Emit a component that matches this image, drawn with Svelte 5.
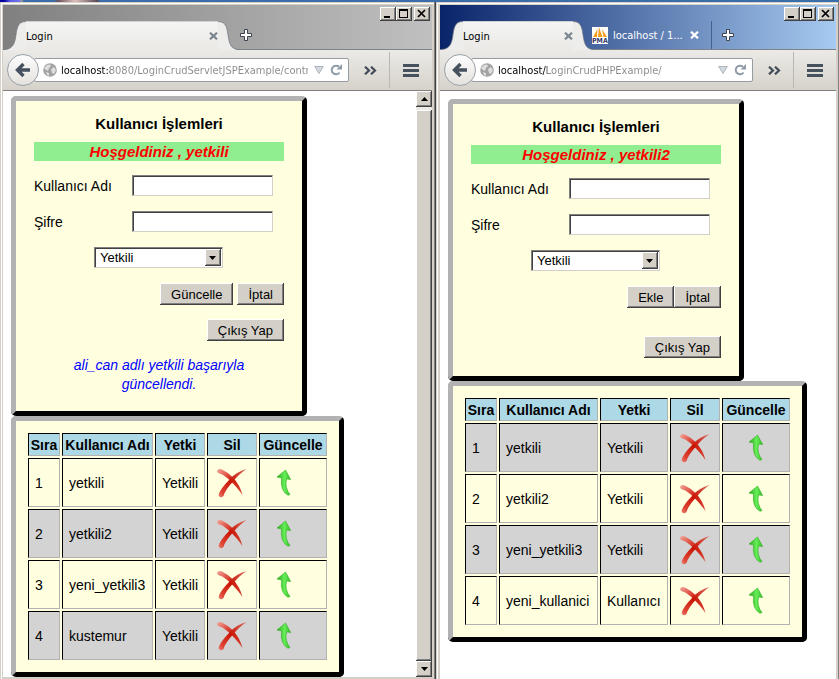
<script>
  const windows = [
    {
      id: 'jsp',
      active: false,
      host: 'localhost',
      path: ':8080/LoginCrudServletJSPExample/controller',
      extraTab: null,
      greeting: 'Hoşgeldiniz , yetkili',
      submit: 'Güncelle',
      message: 'ali_can adlı yetkili başarıyla güncellendi.',
      scroll: true,
      widths: [32, 91, 50, 50, 68],
      rows: [
        ['1', 'yetkili', 'Yetkili'],
        ['2', 'yetkili2', 'Yetkili'],
        ['3', 'yeni_yetkili3', 'Yetkili'],
        ['4', 'kustemur', 'Yetkili']
      ]
    },
    {
      id: 'php',
      active: true,
      host: 'localhost',
      path: '/LoginCrudPHPExample/',
      extraTab: 'localhost / 1...',
      greeting: 'Hoşgeldiniz , yetkili2',
      submit: 'Ekle',
      message: '',
      scroll: false,
      widths: [32, 99, 68, 50, 68],
      rows: [
        ['1', 'yetkili', 'Yetkili'],
        ['2', 'yetkili2', 'Yetkili'],
        ['3', 'yeni_yetkili3', 'Yetkili'],
        ['4', 'yeni_kullanici', 'Kullanıcı']
      ]
    }
  ];
  const headers = ['Sıra', 'Kullanıcı Adı', 'Yetki', 'Sil', 'Güncelle'];
</script>

{#snippet plus()}
  <button class="bare plus" aria-label="Yeni sekme">
    <svg width="12" height="12" viewBox="0 0 12 12"><path d="M4.5.5h3v4h4v3h-4v4h-3v-4h-4v-3h4z" fill="#fff" stroke="#3c4450" /></svg>
  </button>
{/snippet}

{#snippet cross(color)}
  <svg width="9" height="8" viewBox="0 0 9 8"><path d="M1 .7 8 7.3M8 .7 1 7.3" stroke={color} stroke-width="2.2" /></svg>
{/snippet}

<div class="desktop">
  <div class="strip"></div>
  <main>
    {#each windows as w (w.id)}
      <section class="window" class:active={w.active}>
        <header class="titlebar">
          <div class="tabs">
            <div class="tab">
              <svg class="curve" width="23" height="29" viewBox="0 0 23 29">
                <path class="fill" d="M0 29C8 28.500 11 25 12.500 17 14 8 14 .5 23 .5V29z" />
                <path d="M0 28.500C8 28.500 11 25 12.500 17 14 8 14 .5 23 .5" fill="none" stroke="#6d7580" stroke-opacity=".7" />
              </svg>
              <div class="tab-body">
                <span>Login</span>
                <button class="bare" aria-label="Sekmeyi kapat">{@render cross('#7b858f')}</button>
              </div>
              <svg class="curve" width="22" height="29" viewBox="0 0 22 29">
                <path class="fill" d="M22 29C14 28.500 12 25 10.500 17 9 8 9 .5 0 .5V29z" />
                <path d="M22 28.500C14 28.500 12 25 10.500 17 9 8 9 .5 0 .5" fill="none" stroke="#6d7580" stroke-opacity=".7" />
              </svg>
            </div>
            {#if w.extraTab}
              <div class="tab-back">
                <svg width="16" height="17" viewBox="0 0 16 17">
                  <rect width="16" height="17" fill="#fff" />
                  <path d="M1 10 5.500 2 5 10zM6 10 7 0 10.500 10zM10 2 15 10H11.500z" fill="#f89c1c" />
                  <text x="0" y="16" font-size="7" font-weight="bold" fill="#39396b">PMA</text>
                </svg>
                <span>{w.extraTab}</span>
                <button class="bare" aria-label="Sekmeyi kapat">{@render cross('#fff')}</button>
              </div>
            {/if}
            {@render plus()}
          </div>
          <div class="controls">
            <button aria-label="Küçült"><svg width="12" height="10" viewBox="0 0 12 10"><path d="M2 7h6v2H2z" /></svg></button>
            <button aria-label="Büyüt"><svg width="12" height="10" viewBox="0 0 12 10"><path d="M1 0h9v9H1zM2 2v6h7V2z" fill-rule="evenodd" /></svg></button>
            <button class="close" aria-label="Kapat"><svg width="12" height="10" viewBox="0 0 12 10"><path d="M2 1 9 8M9 1 2 8" stroke="#000" stroke-width="1.700" /></svg></button>
          </div>
        </header>

        <nav>
          <button class="back" aria-label="Geri">
            <svg width="16" height="16" viewBox="0 0 16 16"><path d="M8.500 2 2.500 8l6 6M3 8h12" fill="none" stroke="#45515e" stroke-width="3.400" /></svg>
          </button>
          <div class="address">
            <svg class="globe" width="14" height="14" viewBox="0 0 14 14">
              <circle cx="7" cy="7" r="6.800" fill="#a2a2a2" />
              <path d="M1 5 4 2l3-.5L8 3 6 5 5 8 3 7zM8 6l3-2 2 3-2 4-2-1zM3 9l3 1v3l-2-1z" fill="#dedede" />
            </svg>
            <input aria-label="Adres" value={w.host + w.path} />
            <svg width="10" height="8" viewBox="0 0 10 8"><path d="M.7.5h8.600L5 7.500z" fill="#d4dae0" stroke="#aab3bc" /></svg>
            <button class="bare" aria-label="Yenile">
              <svg width="13" height="12" viewBox="0 0 13 12"><path d="M9.500 8.500A4.300 4.300 0 1 1 9 2.800" fill="none" stroke="#8f9ba7" stroke-width="2" /><path d="M12 0v5.500H6.500z" fill="#8f9ba7" /></svg>
            </button>
          </div>
          <button class="bare more" aria-label="Diğer">
            <svg width="13" height="9" viewBox="0 0 13 9"><path d="M1 .7 5 4.500 1 8.300M7 .7l4 3.800-4 3.800" fill="none" stroke="#404b57" stroke-width="2.200" /></svg>
          </button>
          <button class="bare menu" aria-label="Menü">
            <svg width="16" height="13" viewBox="0 0 16 13"><path d="M0 1.500h16M0 6.500h16M0 11.500h16" stroke="#46515e" stroke-width="3" /></svg>
          </button>
        </nav>

        <div class="viewport">
          <div class="page" class:offset={!w.scroll}>
            <form class="card" onsubmit={(e) => e.preventDefault()}>
              <h1>Kullanıcı İşlemleri</h1>
              <p class="greeting">{w.greeting}</p>
              <div class="field">
                <label for="{w.id}-user">Kullanıcı Adı</label>
                <input id="{w.id}-user" type="text" />
              </div>
              <div class="field">
                <label for="{w.id}-pass">Şifre</label>
                <input id="{w.id}-pass" type="password" />
              </div>
              <div class="role">
                <select aria-label="Yetki">
                  <option>Yetkili</option>
                  <option>Kullanıcı</option>
                </select>
                <svg width="16" height="17" viewBox="0 0 16 17">
                  <path d="M0 0h16v17H0z" fill="#404040" /><path d="M0 0h15v16H0z" fill="#fff" />
                  <path d="M1 1h14v15H1z" fill="#808080" /><path d="M1 1h13v14H1z" fill="#d4d0c8" />
                  <path d="M4 7h7l-3.500 4z" />
                </svg>
              </div>
              <div class="actions" class:joined={!w.message}>
                <button>{w.submit}</button>
                <button type="reset">İptal</button>
              </div>
              <div class="actions" class:apart={!w.message}>
                <button type="button">Çıkış Yap</button>
              </div>
              {#if w.message}<p class="message">{w.message}</p>{/if}
            </form>

            <div class="card list">
              <table>
                <colgroup>
                  {#each w.widths as width}<col style="width: {width}px" />{/each}
                </colgroup>
                <thead>
                  <tr>{#each headers as h}<th>{h}</th>{/each}</tr>
                </thead>
                <tbody class:dark-first={w.active}>
                  {#each w.rows as row}
                    <tr>
                      {#each row as cell}<td>{cell}</td>{/each}
                      <td>
                        <a href="#sil" aria-label="Sil">
                          <svg width="32" height="32" viewBox="0 0 32 32">
                            <path d="M1 4Q2 1 6 2.500 13 6 17 10.500 24 18 26.500 28 20 19 14 13.500 8 8 5 7 1 6 1 4z" fill="url(#{w.id}-fade)" />
                            <path d="M30.500 2Q22 8 17.500 14 9 23 7.500 29 4 32 2.500 28 4 22 14 12 20 5 30.500 2z" fill="url(#{w.id}-red)" />
                          </svg>
                        </a>
                      </td>
                      <td>
                        <a href="#guncelle" class:centered={w.active} aria-label="Güncelle">
                          <svg width="32" height="32" viewBox="0 0 32 32">
                            <path d="M17.500 3 22.700 12.500 18.500 12Q16.500 21 22 27.500L20 28.300Q12 24 13.500 11L9 10z" fill="url(#{w.id}-green)" stroke="#35ae27" stroke-width=".6" />
                          </svg>
                        </a>
                      </td>
                    </tr>
                  {/each}
                </tbody>
              </table>
              <svg class="defs" width="0" height="0" aria-hidden="true">
                <defs>
                  <linearGradient id="{w.id}-fade" x2="1" y2="1">
                    <stop offset="0" stop-color="#f4a79c" /><stop offset=".5" stop-color="#cf1c0c" /><stop offset="1" stop-color="#d5483a" />
                  </linearGradient>
                  <linearGradient id="{w.id}-red" x1="1" x2="0" y2="1">
                    <stop offset="0" stop-color="#dc7063" /><stop offset=".5" stop-color="#c81404" /><stop offset=".85" stop-color="#de4434" /><stop offset="1" stop-color="#ec8579" />
                  </linearGradient>
                  <linearGradient id="{w.id}-green" x2="1">
                    <stop offset="0" stop-color="#2ba81e" /><stop offset=".55" stop-color="#66ee58" /><stop offset="1" stop-color="#31b823" />
                  </linearGradient>
                </defs>
              </svg>
            </div>
          </div>
          {#if w.scroll}
            <div class="scrollbar">
              <button aria-label="Yukarı"><svg width="7" height="4" viewBox="0 0 7 4"><path d="M0 4h7L3.500 0z" /></svg></button>
              <div class="thumb"></div>
              <button aria-label="Aşağı"><svg width="7" height="4" viewBox="0 0 7 4"><path d="M0 0h7L3.500 4z" /></svg></button>
            </div>
          {/if}
        </div>
      </section>
    {/each}
  </main>
</div>

<style>
  .desktop {
    display: flex;
    flex-direction: column;
    min-height: 100vh;
    font-family: "Liberation Sans", Arial, sans-serif;
    font-size: 14px;
    color: #000;
  }
  .desktop *, .desktop { box-sizing: border-box; }
  svg { display: block; flex: none; }
  h1, p { margin: 0; }
  .strip {
    height: 2px;
    background: linear-gradient(90deg, #0000a0 4px, #5b5bea 10px, #7474ee 20px, #a8a49a 21px, #3b6ea8 24px, #3b6ea8 54px, #6b5560 58px, #e0c0bc 75px, #554850 98px, #3b6ea8 99px);
  }
  main {
    flex: 1;
    display: grid;
    grid-template-columns: 436fr 403fr;
  }
  .window {
    display: flex;
    flex-direction: column;
    min-width: 0;
    padding: 3px 4px 2px 3px;
    background: #d4d0c8;
    box-shadow: inset -1px 0 #404040, inset -2px 0 #808080, inset 1px 1px #d4d0c8, inset 2px 2px #fff;
  }
  .window.active {
    padding: 3px 3px 0 4px;
    box-shadow: inset -1px 0 #808080, inset 1px 1px #d4d0c8, inset 2px 2px #fff;
  }

  .titlebar {
    display: flex;
    justify-content: space-between;
    height: 45px;
    background: linear-gradient(90deg, #808080, #c0c0c0);
    border-bottom: 1px solid #7d828a;
    font-family: "DejaVu Sans Condensed", "Noto Sans", sans-serif;
    font-size: 11px;
  }
  .active .titlebar { background: linear-gradient(90deg, #0a246a, #a6caf0); }
  .tabs {
    flex: 1;
    display: flex;
    align-items: flex-end;
    min-width: 0;
  }
  .tab {
    display: flex;
    margin-bottom: -1px;
  }
  .fill { fill: #ededeb; }
  .tab-body {
    display: flex;
    align-items: center;
    justify-content: space-between;
    width: 192px;
    height: 29px;
    border-top: 1px solid #cfd2d5;
    background: linear-gradient(#f4f4f2, #eae9e6);
  }
  .active .tab-body { width: 110px; }
  .bare {
    display: flex;
    padding: 0;
    border: 0;
    background: none;
  }
  .tab-back {
    display: flex;
    align-items: center;
    height: 28px;
    gap: 5px;
    margin-left: -3px;
    color: #fff;
    padding-right: 12px;
    border-right: 1px solid #42618f;
  }
  .tab-back span { width: 72px; white-space: nowrap; }
  .plus {
    height: 28px;
    align-items: center;
  }
  .active .plus { margin-left: 10px; }
  .controls {
    display: flex;
    padding: 2px 2px 0 0;
  }
  .controls button, .scrollbar button {
    display: flex;
    align-items: center;
    justify-content: center;
    flex: none;
    width: 16px;
    height: 14px;
    padding: 0;
    border: 0;
    background: #d4d0c8;
    box-shadow: inset -1px -1px #404040, inset 1px 1px #fff, inset -2px -2px #808080;
  }
  .controls .close { margin-left: 2px; }

  nav {
    display: flex;
    align-items: center;
    height: 41px;
    padding: 0 13px 0 4px;
    border-bottom: 1px solid #808080;
    background: linear-gradient(#ebeae7, #d6d2ca);
  }
  .back {
    position: relative;
    display: flex;
    align-items: center;
    justify-content: center;
    flex: none;
    width: 32px;
    height: 32px;
    padding: 0;
    border: 1px solid #9aa1aa;
    border-radius: 50%;
    background: linear-gradient(#fdfdfd, #e4e2de);
  }
  .address {
    flex: 1;
    display: flex;
    align-items: center;
    min-width: 0;
    height: 24px;
    margin-left: -5px;
    padding: 0 5px 0 8px;
    border: 1px solid #979ca2;
    border-radius: 2px;
    background: #fff;
  }
  .address input {
    flex: 1;
    min-width: 0;
    height: 20px;
    margin: 0 6px 0 4px;
    padding: 0;
    border: 0;
    background: linear-gradient(90deg, #000 49px, #8a8a8a 49px);
    background-clip: text;
    -webkit-background-clip: text;
    color: transparent;
    font-family: "DejaVu Sans Condensed", "Noto Sans", sans-serif;
    font-size: 11px;
  }
  .address .bare { margin-left: 6px; }
  .more { margin: 0 12px 0 15px; }
  .menu {
    height: 36px;
    align-items: center;
    padding-left: 13px;
    border-left: 1px solid #b9b8b5;
  }

  .viewport {
    flex: 1;
    display: flex;
    background: #fff;
  }
  .page {
    flex: 1;
    min-width: 0;
    padding: 5px 0 0 8px;
  }
  .page.offset { padding-top: 8px; }
  .card {
    width: 296px;
    padding: 14px 18px 17px;
    border: 5px solid #000;
    border-color: #b2b2b2 #000 #000 #b2b2b2;
    border-radius: 5px;
    background: #ffffe0;
  }
  h1 {
    margin-bottom: 9px;
    font-size: 15px;
    line-height: 18px;
    text-align: center;
  }
  .greeting {
    margin-bottom: 14px;
    background: #90ee90;
    color: #f00;
    font-size: 15px;
    font-weight: bold;
    font-style: italic;
    line-height: 19px;
    text-align: center;
  }
  .field {
    display: flex;
    align-items: center;
    margin-bottom: 15px;
  }
  .field label { width: 98px; }
  .field input, select {
    height: 21px;
    border: 1px solid;
    border-color: #808080 #d4d0c8 #d4d0c8 #808080;
    border-radius: 0;
    background: #fff;
    box-shadow: inset 1px 1px #404040;
    font-family: inherit;
    font-size: 13px;
    color: #000;
  }
  .field input { width: 141px; padding: 0 3px; }
  .role {
    position: relative;
    width: 129px;
    margin: 0 0 15px 60px;
  }
  select {
    display: block;
    width: 100%;
    padding: 0 5px;
    appearance: none;
  }
  .role svg {
    position: absolute;
    top: 2px;
    right: 2px;
    pointer-events: none;
  }
  .actions {
    display: flex;
    justify-content: flex-end;
    gap: 4px;
    margin-bottom: 14px;
  }
  .actions.joined { gap: 0; }
  .actions.apart { margin: 28px 0 1px; }
  .actions button {
    height: 22px;
    padding: 0 11px;
    border: 0;
    background: #d4d0c8;
    box-shadow: inset -1px -1px #404040, inset 1px 1px #fff, inset -2px -2px #808080;
    font-family: inherit;
    font-size: 13px;
    color: #000;
  }
  .message {
    margin: 0 30px;
    padding-top: 1px;
    color: #00f;
    font-style: italic;
    line-height: 19px;
    text-align: center;
  }

  .list {
    width: fit-content;
    padding: 10px;
  }
  .defs { position: absolute; }
  table {
    table-layout: fixed;
    border-collapse: separate;
    border-spacing: 2px;
    width: 0;
  }
  th, td {
    border: 1px solid;
    border-color: #000 #b2b2b2 #b2b2b2 #000;
  }
  th {
    height: 23px;
    padding: 0;
    background: #add8e6;
    white-space: nowrap;
  }
  td {
    height: 49px;
    padding: 0 6px;
    white-space: nowrap;
  }
  td a { display: block; padding-left: 2px; }
  td a.centered {
    display: flex;
    justify-content: center;
    padding: 0;
  }
  tbody tr:nth-child(even), .dark-first tr:nth-child(odd) { background: #d3d3d3; }
  .dark-first tr:nth-child(even) { background: none; }

  .scrollbar {
    display: flex;
    flex-direction: column;
    flex: none;
    width: 16px;
    background: #eceae6;
  }
  .scrollbar button { height: 16px; }
  .thumb {
    flex: 1;
    margin-top: 3px;
    background: #d4d0c8;
    box-shadow: inset -1px -1px #404040, inset 1px 1px #fff, inset -2px -2px #808080;
  }
</style>
